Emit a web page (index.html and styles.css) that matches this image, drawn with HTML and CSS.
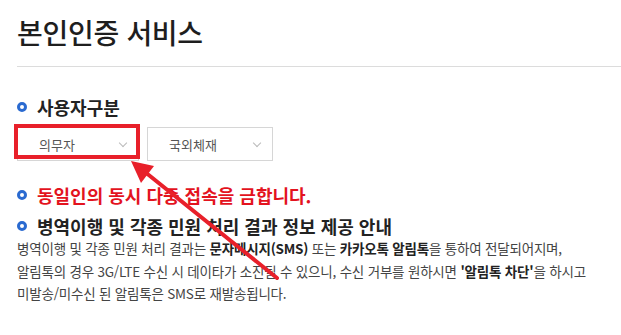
FILE: index.html
```html
<!DOCTYPE html>
<html lang="ko">
<head>
<meta charset="utf-8">
<link rel="stylesheet" href="styles.css">
</head>
<body>
<div class="page">
  <h1 class="title">본인인증 서비스</h1>
  <hr class="rule">
  <h2 class="sub first"><span class="bullet"></span>사용자구분</h2>
  <div class="selects">
    <div class="sel sel-first"><span class="sel-text">의무자</span><span class="chev"></span></div>
    <div class="sel"><span class="sel-text">국외체재</span><span class="chev"></span></div>
  </div>
  <h2 class="sub warn"><span class="bullet"></span>동일인의 동시 다중 접속을 금합니다.</h2>
  <h2 class="sub info"><span class="bullet"></span>병역이행 및 각종 민원 처리 결과 정보 제공 안내</h2>
  <p class="desc">병역이행 및 각종 민원 처리 결과는 <b>문자메시지(SMS)</b> 또는 <b>카카오톡 알림톡</b>을 통하여 전달되어지며,<br>알림톡의 경우 3G/LTE 수신 시 데이타가 소진될 수 있으니, 수신 거부를 원하시면 <b>'알림톡 차단'</b>을 하시고<br>미발송/미수신 된 알림톡은 SMS로 재발송됩니다.</p>
  <div class="redbox"></div>
  <svg class="arrow" width="621" height="335" viewBox="0 0 621 335">
    <line x1="277" y1="278" x2="145" y2="172" stroke="#e8202a" stroke-width="4" stroke-linecap="round"/>
    <polygon points="131,161 154,166 141,183" fill="#e8202a"/>
  </svg>
</div>
</body>
</html>
```
FILE: styles.css
```css
html, body {
  margin: 0;
  padding: 0;
  background: #fff;
}
.page {
  position: relative;
  width: 621px;
  height: 335px;
  overflow: hidden;
  padding-left: 17px;
  box-sizing: border-box;
  font-family: "Noto Sans CJK KR", "Noto Sans", sans-serif;
  color: #222;
}
.title {
  margin: 0;
  padding-top: 13px;
  font-size: 28px;
  line-height: 38px;
  font-weight: 500;
  color: #1e1e1e;
  letter-spacing: -0.3px;
}
.rule {
  margin: 15px 0 0 0;
  border: 0;
  border-top: 1px solid #dcdcdc;
  height: 0;
}
.sub {
  margin: 0;
  display: flex;
  align-items: center;
  font-size: 18px;
  font-weight: 700;
  line-height: 22px;
  color: #222;
  letter-spacing: 0;
}
.sub.first {
  margin-top: 29px;
}
.bullet {
  width: 4px;
  height: 4px;
  border-radius: 50%;
  border: 3px solid #2a6ad0;
  margin-right: 10px;
  flex: none;
}
.selects {
  display: flex;
  gap: 8px;
  margin-top: 9px;
}
.sel {
  position: relative;
  width: 126px;
  height: 34px;
  box-sizing: border-box;
  border: 1px solid #d6d6d6;
  display: flex;
  align-items: center;
  padding-left: 21px;
  font-size: 13px;
  color: #555;
}
.sel-first {
  width: 122px;
}
.chev {
  position: absolute;
  right: 12px;
  top: 12px;
  width: 5px;
  height: 5px;
  border-right: 1px solid #bbb;
  border-bottom: 1px solid #bbb;
  transform: rotate(45deg);
}
.warn {
  margin-top: 23px;
  color: #e3131e;
}
.info {
  margin-top: 9px;
}
.desc {
  margin: 0;
  font-size: 13.5px;
  line-height: 22.5px;
  color: #444;
  letter-spacing: -0.2px;
}
.desc b {
  color: #222;
  font-weight: 700;
}
.redbox {
  position: absolute;
  left: 14px;
  top: 124px;
  width: 118px;
  height: 27px;
  border: 4px solid #e8202a;
}
.arrow {
  position: absolute;
  left: 0;
  top: 0;
}
```
